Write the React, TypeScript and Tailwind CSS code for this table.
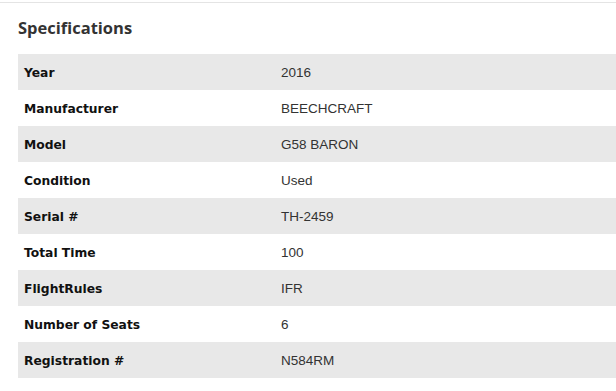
import React from "react";

const rows: [string, string][] = [
  ["Year", "2016"],
  ["Manufacturer", "BEECHCRAFT"],
  ["Model", "G58 BARON"],
  ["Condition", "Used"],
  ["Serial #", "TH-2459"],
  ["Total Time", "100"],
  ["FlightRules", "IFR"],
  ["Number of Seats", "6"],
  ["Registration #", "N584RM"],
];

export default function App() {
  return (
    <div className="w-[616px] h-[391px] bg-white overflow-hidden">
      <div className="h-[2px]" />
      <div className="h-px bg-[#e4e4e4]" />
      <div className="pl-[18px]">
        <h2
          className="h-[51px] pt-[14px] text-[16.5px] leading-[22px] font-bold text-[#333333]"
          style={{ fontFamily: '"Open Sans", sans-serif' }}
        >
          Specifications
        </h2>
        <div className="flex flex-col">
          {rows.map(([k, v], i) => (
            <div
              key={k}
              className={`flex items-center h-[36px] ${i % 2 === 0 ? "bg-[#e8e8e8]" : "bg-white"}`}
            >
              <div
                className="w-[263px] pl-[6px] pt-px text-[12.3px] leading-[16px] font-bold text-[#111111]"
                style={{ fontFamily: '"DejaVu Sans", sans-serif' }}
              >
                {k}
              </div>
              <div
                className="pt-px text-[13.5px] leading-[16px] text-[#333333]"
                style={{ fontFamily: '"Liberation Sans", Arial, sans-serif' }}
              >
                {v}
              </div>
            </div>
          ))}
        </div>
      </div>
    </div>
  );
}
